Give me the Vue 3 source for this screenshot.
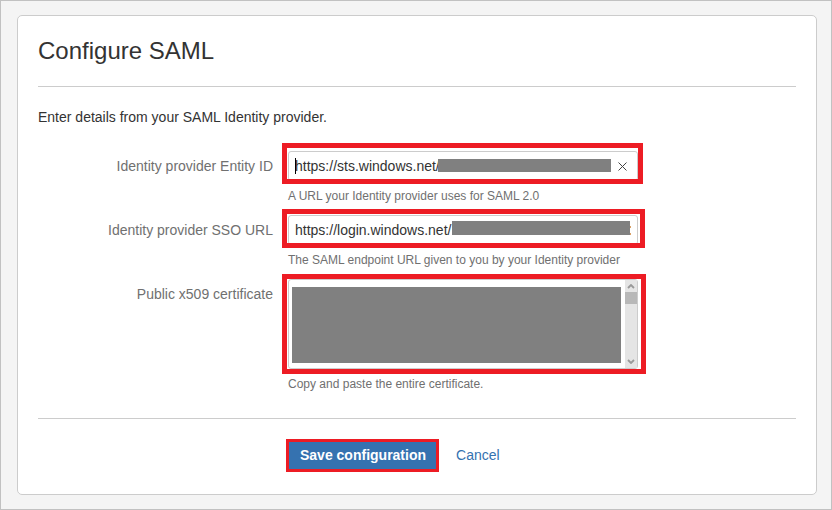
<script setup>
import { ref } from 'vue'

const entityId = ref('https://sts.windows.net/')
const ssoUrl = ref('https://login.windows.net/')
const certificate = ref('')
</script>

<template>
  <main class="page">
    <form class="card" @submit.prevent>
      <h1 class="title">Configure SAML</h1>
      <p class="intro">Enter details from your SAML Identity provider.</p>

      <div class="fields">
        <div class="field">
          <label class="label" for="entity-id">Identity provider Entity ID</label>
          <div class="body">
            <div class="control marked mark-entity">
              <input id="entity-id" v-model="entityId" class="input" type="text" aria-describedby="entity-hint" />
              <span class="caret"></span>
              <span class="redacted redacted-entity"></span>
              <button class="clear" type="button" aria-label="Clear" @click="entityId = ''">
                <svg width="9" height="9" viewBox="0 0 9 9">
                  <path d="M0.5 0.5 8.5 8.5M8.5 0.5 0.5 8.5" fill="none" stroke="#444" stroke-width="1" />
                </svg>
              </button>
            </div>
            <p id="entity-hint" class="hint">A URL your Identity provider uses for SAML 2.0</p>
          </div>
        </div>

        <div class="field">
          <label class="label" for="sso-url">Identity provider SSO URL</label>
          <div class="body">
            <div class="control marked mark-sso">
              <input id="sso-url" v-model="ssoUrl" class="input" type="text" aria-describedby="sso-hint" />
              <span class="redacted redacted-sso"></span>
            </div>
            <p id="sso-hint" class="hint">The SAML endpoint URL given to you by your Identity provider</p>
          </div>
        </div>

        <div class="field">
          <label class="label" for="certificate">Public x509 certificate</label>
          <div class="body">
            <div class="control marked mark-cert">
              <textarea id="certificate" v-model="certificate" class="input area" aria-describedby="cert-hint"></textarea>
              <span class="redacted redacted-cert"></span>
              <span class="scrollbar">
                <svg width="8" height="5" viewBox="0 0 8 5">
                  <path d="M1 4 4 1 7 4" fill="none" stroke="#999" stroke-width="1.8" />
                </svg>
                <span class="thumb"></span>
                <svg class="down" width="8" height="5" viewBox="0 0 8 5">
                  <path d="M1 1 4 4 7 1" fill="none" stroke="#999" stroke-width="1.8" />
                </svg>
              </span>
            </div>
            <p id="cert-hint" class="hint">Copy and paste the entire certificate.</p>
          </div>
        </div>
      </div>

      <div class="actions">
        <div class="marked mark-save">
          <button class="save" type="submit">Save configuration</button>
        </div>
        <a class="cancel" href="#">Cancel</a>
      </div>
    </form>
  </main>
</template>

<style>
body {
  background: #f4f4f4;
}
</style>

<style scoped>
.page {
  box-sizing: border-box;
  min-height: 100vh;
  padding: 14px 14px 14px 16px;
  border: 1px solid #c1c1c1;
  background: #f4f4f4;
  color: #333;
  font: 14px/20px "Liberation Sans", Arial, sans-serif;
}

.card {
  padding: 20px;
  border: 1px solid #ccc;
  border-radius: 5px;
  background: #fff;
}

.title {
  margin: 0;
  padding-bottom: 20px;
  border-bottom: 1px solid #ccc;
  font-size: 24px;
  font-weight: 400;
  line-height: 30px;
}

.intro {
  margin: 20px 0 24px;
}

.fields {
  display: flex;
  flex-direction: column;
  gap: 9px;
  padding-bottom: 24px;
}

.field {
  display: grid;
  grid-template-columns: 235px minmax(0, 350px);
  column-gap: 15px;
}

.label {
  padding-top: 5px;
  color: #707070;
  text-align: right;
}

.control {
  display: flex;
}

.marked {
  position: relative;
}

.marked::after {
  content: "";
  position: absolute;
  border: 5px solid #ed1c24;
  pointer-events: none;
}

.mark-entity::after {
  inset: -8px -5px -3px -6px;
}

.mark-sso::after {
  inset: -6px -7px -3px -6px;
}

.mark-cert::after {
  inset: -5px -8px -5px -6px;
}

.mark-save::after {
  inset: -1px -2px -2px;
  border-width: 3px;
}

.input {
  box-sizing: border-box;
  width: 100%;
  height: 30px;
  margin: 0;
  padding: 4px 6px;
  border: 1px solid #ccc;
  border-radius: 3px;
  outline: 0;
  background: #fff;
  color: #333;
  font: inherit;
}

.area {
  height: 90px;
  resize: none;
}

.caret {
  position: absolute;
  top: 7px;
  left: 7px;
  width: 1px;
  height: 16px;
  background: #000;
}

.redacted {
  position: absolute;
  background: #808080;
}

.redacted-entity {
  inset: 8px 27px 9px 150px;
}

.redacted-sso {
  inset: 6px 8px 10px 164px;
}

/* Edge of the last covered character */
.redacted-sso::after {
  content: "";
  position: absolute;
  top: 5px;
  left: 100%;
  width: 1px;
  height: 5px;
  border: solid #d9a066;
  border-width: 2px 0;
}

.redacted-cert {
  inset: 8px 17px 6px 4px;
}

.clear {
  position: absolute;
  top: 6px;
  right: 7px;
  display: grid;
  place-items: center;
  width: 18px;
  height: 18px;
  padding: 0;
  border: 0;
  background: none;
}

.scrollbar {
  position: absolute;
  inset: 1px 1px 1px auto;
  display: flex;
  flex-direction: column;
  align-items: center;
  gap: 3px;
  box-sizing: border-box;
  width: 12px;
  padding: 4px 0;
  background: #e5e5e5;
}

.thumb {
  width: 100%;
  height: 12px;
  background: #b8b8b8;
}

.down {
  margin-top: auto;
}

.hint {
  margin: 5px 0 0;
  color: #707070;
  font-size: 12px;
}

.actions {
  display: flex;
  align-items: center;
  gap: 19px;
  padding: 21px 0 4px 250px;
  border-top: 1px solid #ccc;
}

.save {
  display: block;
  height: 30px;
  padding: 0 11px 0 12px;
  border: 0;
  border-radius: 3px;
  background: #3572b0;
  color: #fff;
  font: inherit;
  font-weight: 700;
}

.cancel {
  color: #3572b0;
  text-decoration: none;
}
</style>
